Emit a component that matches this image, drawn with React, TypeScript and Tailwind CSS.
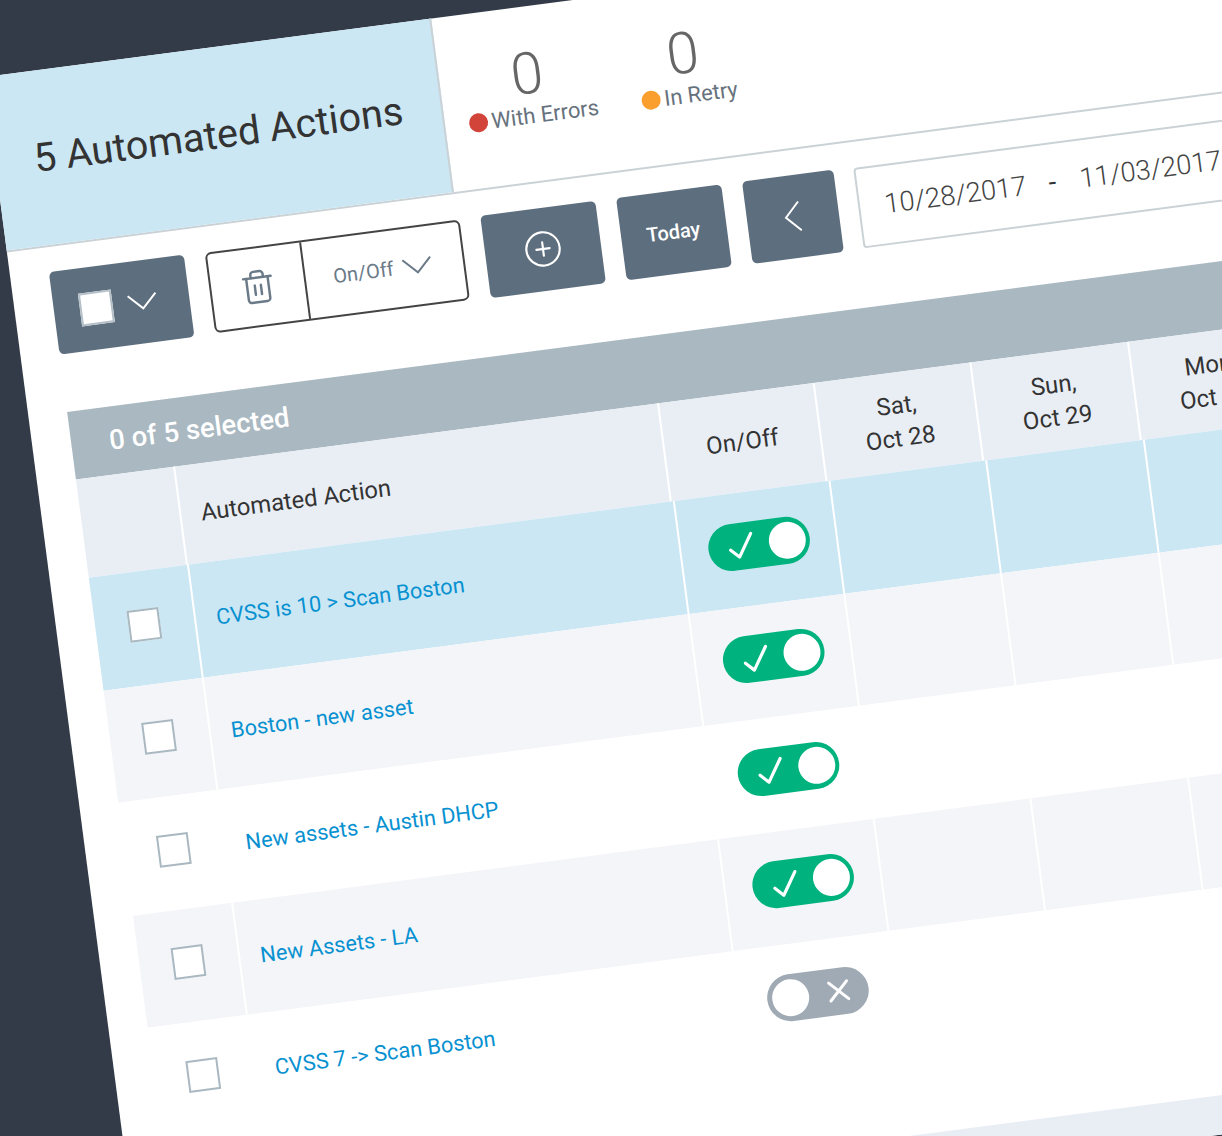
import { Trash2, CirclePlus } from 'lucide-react'

const days = [
  ['Sat,', 'Oct 28'],
  ['Sun,', 'Oct 29'],
  ['Mon,', 'Oct 30'],
  ['Tue,', 'Oct 31'],
]

const actions = [
  { name: 'CVSS is 10 > Scan Boston', on: true, bg: 'bg-[#cbe7f4]' },
  { name: 'Boston - new asset', on: true, bg: 'bg-[#f4f5f8]' },
  { name: 'New assets - Austin DHCP', on: true, bg: 'bg-white' },
  { name: 'New Assets - LA', on: true, bg: 'bg-[#f4f5f8]' },
  { name: 'CVSS 7 -> Scan Boston', on: false, bg: 'bg-white' },
]

function Toggle({ on }: { on: boolean }) {
  if (on) {
    return (
      <div className="flex h-[47px] w-[102px] items-center justify-between rounded-full bg-[#00b37e] pl-[20px] pr-[4px]">
        <svg width="27" height="28" viewBox="0 0 27 28" fill="none" stroke="white" strokeWidth="3.200" strokeLinecap="round" strokeLinejoin="round">
          <path d="M2 17l8 8L24 3" />
        </svg>
        <div className="h-[37px] w-[37px] rounded-full bg-white" />
      </div>
    )
  }
  return (
    <div className="flex h-[47px] w-[102px] items-center justify-between rounded-full bg-[#a0aab5] pl-[5px] pr-[18px]">
      <div className="h-[37px] w-[37px] rounded-full bg-white" />
      <svg width="24" height="24" viewBox="0 0 24 24" fill="none" stroke="white" strokeWidth="3" strokeLinecap="round">
        <path d="M3 3l18 18M21 3L3 21" />
      </svg>
    </div>
  )
}

export default function App() {
  return (
    <div className="h-[1136px] w-[1222px] overflow-hidden bg-[#323b47] font-['Roboto',sans-serif]">
      <div className="ml-[-15.6px] mt-[76.67px] flex h-[1209px] w-[1600px] origin-top-left rotate-[-7.45deg] flex-col bg-white">
        {/* Header */}
        <header className="flex h-[177px] shrink-0 border-b-2 border-[#cbd2d6]">
          <div className="flex w-[451px] items-center border-r-2 border-[#cbd2d6] bg-[#cbe7f4] pl-[39px]">
            <h1 className="text-[39.700px] leading-none text-[#333333]">5 Automated Actions</h1>
          </div>
          <div className="flex gap-[43px] pl-[23.500px] pt-[39px]">
            <div className="flex flex-col items-center">
              <div className="pr-[3px] text-[58px] font-light leading-[56px] text-[#666666]">0</div>
              <div className="flex h-[28px] items-center gap-[4px] text-[22px] text-[#66727d]">
                <span className="h-[19px] w-[19px] rounded-full bg-[#d2443a]" />
                With Errors
              </div>
            </div>
            <div className="flex flex-col items-center">
              <div className="pr-[3px] text-[58px] font-light leading-[56px] text-[#666666]">0</div>
              <div className="flex h-[28px] items-center gap-[4px] text-[22px] text-[#66727d]">
                <span className="h-[19px] w-[19px] rounded-full bg-[#fa9e2e]" />
                In Retry
              </div>
            </div>
          </div>
        </header>

        {/* Toolbar */}
        <div className="ml-[39px] mt-[24.500px] flex h-[83px] shrink-0 gap-[21px]">
          <div className="flex w-[135.500px] items-center gap-[15px] rounded-[5px] bg-[#5d6e7e] pl-[26px]">
            <div className="h-[33px] w-[33px] border-2 border-[#b5c0c8] bg-white" />
            <svg width="30" height="17" viewBox="0 0 30 17" fill="none" stroke="white" strokeWidth="2">
              <path d="M1 1l14 14L29 1" />
            </svg>
          </div>
          <div className="my-[1px] flex w-[257px] rounded-[6px] border-2 border-[#444444]">
            <div className="flex w-[95px] items-center justify-center border-r-2 border-[#444444]">
              <Trash2 size={37} strokeWidth={1.6} className="text-[#6b7a88]" />
            </div>
            <div className="flex flex-1 items-center gap-[9px] pl-[28px] text-[20px] text-[#6b7a88]">
              On/Off
              <svg width="30" height="17" viewBox="0 0 30 17" fill="none" stroke="#6b7a88" strokeWidth="2">
                <path d="M1 1l14 14L29 1" />
              </svg>
            </div>
          </div>
          <div className="flex w-[116px] items-center justify-center rounded-[5px] bg-[#5d6e7e]">
            <CirclePlus size={40} strokeWidth={1.3} className="text-white" />
          </div>
          <div className="flex w-[106px] items-center justify-center rounded-[5px] bg-[#5d6e7e] text-[20px] font-medium text-white">
            Today
          </div>
          <div className="flex w-[92.500px] items-center justify-center rounded-[5px] bg-[#5d6e7e]">
            <svg width="17" height="31" viewBox="0 0 17 31" fill="none" stroke="white" strokeWidth="2">
              <path d="M16 1L2 15.500l14 14.500" />
            </svg>
          </div>
          <div className="my-[1px] -ml-[1px] flex w-[560px] items-center rounded-[4px] border-2 border-[#cbd2d6] pl-[24.500px] text-[27.300px] font-light text-[#444444]">
            <span>10/28/2017</span>
            <span className="ml-[22.500px] font-normal text-[#333333]">-</span>
            <span className="ml-[24px]">11/03/2017</span>
          </div>
        </div>

        {/* Table */}
        <div className="ml-[38.700px] mt-[58.500px] flex flex-col">
          <div className="flex h-[68px] items-center bg-[#a9b8c1] pl-[38.500px] text-[27.500px] font-medium text-white">
            0 of 5 selected
          </div>
          <div className="flex h-[99px] bg-[#e9eef5] text-[24px] leading-[33px] text-[#333333]">
            <div className="w-[100px] border-r-2 border-white" />
            <div className="flex w-[488.800px] items-center border-r-2 border-white pl-[20px] text-[23.800px]">Automated Action</div>
            <div className="flex w-[156.400px] items-center justify-center border-r-2 border-white">On/Off</div>
            {days.map((d) => (
              <div key={d[1]} className="flex w-[158.400px] flex-col items-center justify-center border-r-2 border-white">
                <span>{d[0]}</span>
                <span>{d[1]}</span>
              </div>
            ))}
          </div>
          {actions.map((a) => (
            <div key={a.name} className={`flex h-[113.500px] ${a.bg}`}>
              {/* body cells sit 3px right of the header cells, as in the reference */}
              <div className="flex w-[101px] items-center justify-center border-r-2 border-white pb-[6px]">
                <div className="h-[32px] w-[32px] border-2 border-[#a9b8c1] bg-white" />
              </div>
              <div className="flex w-[490.800px] items-center border-r-2 border-white pl-[20.500px] text-[21.800px] text-[#0891d1]">
                {a.name}
              </div>
              <div className="flex w-[156.400px] items-center justify-center border-r-2 border-white pb-[7px]">
                <Toggle on={a.on} />
              </div>
              {days.map((d) => (
                <div key={d[1]} className="w-[158.400px] border-r-2 border-white" />
              ))}
            </div>
          ))}
        </div>

        {/* Footer */}
        <div className="mt-auto h-[39px] shrink-0 bg-[#e9eef5]" />
      </div>
    </div>
  )
}
